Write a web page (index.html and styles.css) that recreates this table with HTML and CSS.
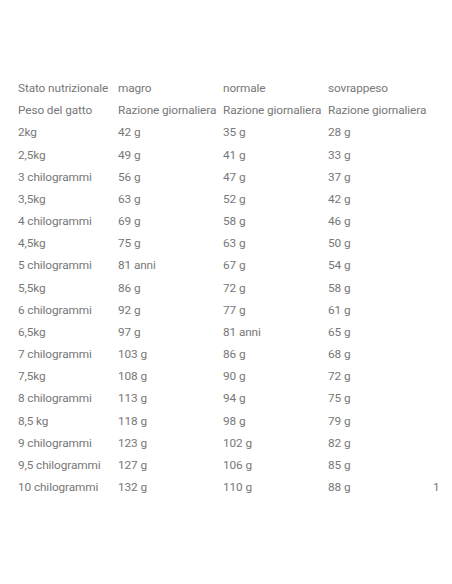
FILE: index.html
```html
<!DOCTYPE html>
<html lang="it">
<head>
<meta charset="utf-8">
<link rel="stylesheet" href="styles.css">
</head>
<body>
<div class="wrap">
<table class="feed">
<colgroup><col class="c1"><col class="c2"><col class="c2"><col class="c2"><col class="c5"></colgroup>
<tr><td>Stato nutrizionale</td><td>magro</td><td>normale</td><td>sovrappeso</td><td></td></tr>
<tr><td>Peso del gatto</td><td>Razione giornaliera</td><td>Razione giornaliera</td><td>Razione giornaliera</td><td></td></tr>
<tr><td>2kg</td><td>42 g</td><td>35 g</td><td>28 g</td><td></td></tr>
<tr><td>2,5kg</td><td>49 g</td><td>41 g</td><td>33 g</td><td></td></tr>
<tr><td>3 chilogrammi</td><td>56 g</td><td>47 g</td><td>37 g</td><td></td></tr>
<tr><td>3,5kg</td><td>63 g</td><td>52 g</td><td>42 g</td><td></td></tr>
<tr><td>4 chilogrammi</td><td>69 g</td><td>58 g</td><td>46 g</td><td></td></tr>
<tr><td>4,5kg</td><td>75 g</td><td>63 g</td><td>50 g</td><td></td></tr>
<tr><td>5 chilogrammi</td><td>81 anni</td><td>67 g</td><td>54 g</td><td></td></tr>
<tr><td>5,5kg</td><td>86 g</td><td>72 g</td><td>58 g</td><td></td></tr>
<tr><td>6 chilogrammi</td><td>92 g</td><td>77 g</td><td>61 g</td><td></td></tr>
<tr><td>6,5kg</td><td>97 g</td><td>81 anni</td><td>65 g</td><td></td></tr>
<tr><td>7 chilogrammi</td><td>103 g</td><td>86 g</td><td>68 g</td><td></td></tr>
<tr><td>7,5kg</td><td>108 g</td><td>90 g</td><td>72 g</td><td></td></tr>
<tr><td>8 chilogrammi</td><td>113 g</td><td>94 g</td><td>75 g</td><td></td></tr>
<tr><td>8,5 kg</td><td>118 g</td><td>98 g</td><td>79 g</td><td></td></tr>
<tr><td>9 chilogrammi</td><td>123 g</td><td>102 g</td><td>82 g</td><td></td></tr>
<tr><td>9,5 chilogrammi</td><td>127 g</td><td>106 g</td><td>85 g</td><td></td></tr>
<tr><td>10 chilogrammi</td><td>132 g</td><td>110 g</td><td>88 g</td><td>1</td></tr>
</table>
</div>
</body>
</html>
```
FILE: styles.css
```css
html, body {
  margin: 0;
  padding: 0;
  background: #fff;
}
.wrap {
  padding: 77px 0 0 18px;
}
.feed {
  border-collapse: collapse;
  table-layout: fixed;
  width: 434px;
  font-family: Roboto, "Liberation Sans", sans-serif;
  font-size: 11.8px;
  letter-spacing: -0.1px;
  color: #777;
}
.c1 { width: 100px; }
.c2 { width: 105px; }
.c5 { width: 19px; }
.feed td {
  padding: 0;
  height: 22.17px;
  line-height: 22.17px;
  white-space: nowrap;
  vertical-align: middle;
}
```
